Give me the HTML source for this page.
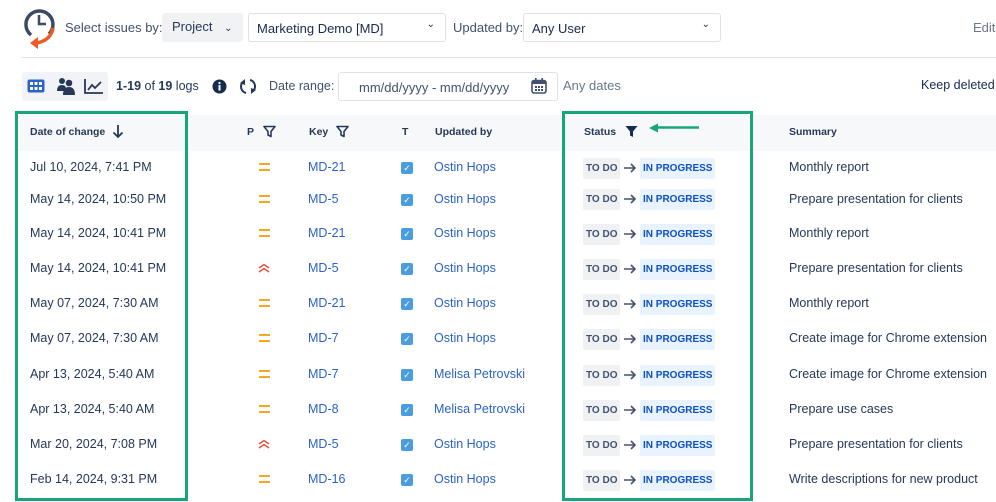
<!DOCTYPE html>
<html><head><meta charset="utf-8"><style>
*{box-sizing:border-box;margin:0;padding:0}
body{width:996px;height:502px;overflow:hidden;background:#fff;font-family:"Liberation Sans",sans-serif;color:#172b4d;position:relative;font-size:13px}
.a{position:absolute;white-space:nowrap}
.sel{position:absolute;border:1px solid #dfe1e6;border-radius:3px;height:29px;top:13px;font-size:13px;padding:7px 8px;color:#172b4d}
.chev{position:absolute;right:10px;top:5px;font-size:10px}
.hdr{font-size:10.5px;font-weight:bold;color:#253858}
.d{left:30px;font-size:12.5px;color:#253858}
.k{left:308px;color:#2a63c9;font-size:12.5px}
.u{left:434px;color:#2a63c9;font-size:12.5px}
.s{left:789px;color:#253858;font-size:12.5px}
.cb{left:401px;width:12px;height:12px;background:#4a9ee0;border-radius:2px;color:#fff;font-size:9px;line-height:12px;text-align:center}
.pm{left:259px;width:11px;height:8px;border-top:2px solid #f5a623;border-bottom:2px solid #f5a623}
.st{left:583px;height:20px;font-size:10px;font-weight:bold;display:flex;align-items:center}
.st .t{display:inline-block;background:#f0f1f3;color:#42526e;padding:5px 3px;border-radius:2px;width:37px;text-align:center}
.st .ar{display:inline-block;width:20px;height:20px;position:relative}
.st .p{display:inline-block;background:#e9f2ff;color:#0b50c4;padding:5px 3px;border-radius:2px;width:75px;text-align:center}
.box{position:absolute;border:3px solid #17a57b}
</style></head><body>
<svg class="a" style="left:22px;top:6px" width="38" height="44" viewBox="0 0 38 44">
<path d="M9 29 A13.5 13.5 0 1 1 27 28" fill="none" stroke="#3d4a66" stroke-width="3.5"/>
<path d="M17 9 V18 H24" fill="none" stroke="#3d4a66" stroke-width="2.5"/>
<path d="M31 22 Q29 34 15 37" fill="none" stroke="#ee5a24" stroke-width="3.5"/>
<path d="M8 37 L16 31 L16 43 Z" fill="#ee5a24"/>
</svg>
<div class="a" style="left:65px;top:20px;font-size:13px;color:#42526e">Select issues by:</div>
<div class="a" style="left:162px;top:13px;width:81px;height:29px;background:#f1f2f4;border-radius:3px;font-size:13px;padding:6px 10px;color:#253858">Project <span style="font-size:10px;margin-left:8px">&#8964;</span></div>
<div class="sel" style="left:248px;width:198px">Marketing Demo [MD]<span class="chev">&#8964;</span></div>
<div class="a" style="left:453px;top:20px;font-size:13px;color:#42526e">Updated by:</div>
<div class="sel" style="left:523px;width:198px">Any User<span class="chev">&#8964;</span></div>
<div class="a" style="left:973px;top:20px;font-size:13px;color:#6b778c">Edit</div>
<div class="a" style="left:22px;top:57px;width:974px;height:1px;background:#dfe1e6"></div>

<div class="a" style="left:22px;top:72px;width:86px;height:29px;background:#f1f3f6;border-radius:3px"></div>
<svg class="a" style="left:27px;top:79px" width="18" height="14"><rect x="0.5" y="0.5" width="17" height="13" rx="2" fill="#2a63c9"/><g fill="#fff"><rect x="3" y="3" width="3" height="3"/><rect x="7.5" y="3" width="3" height="3"/><rect x="12" y="3" width="3" height="3"/><rect x="3" y="8" width="3" height="3"/><rect x="7.5" y="8" width="3" height="3"/><rect x="12" y="8" width="3" height="3"/></g></svg>
<svg class="a" style="left:56px;top:77px" width="20" height="18"><circle cx="6" cy="4" r="3" fill="#253858"/><circle cx="13" cy="6" r="3.3" fill="#253858"/><path d="M1 14 Q1 8 6 8 Q10 8 10 12 V14Z" fill="#253858"/><path d="M7 18 Q7 10 13 10 Q19 10 19 18Z" fill="#253858"/></svg>
<svg class="a" style="left:84px;top:78px" width="20" height="16"><path d="M1 1 V15 H19" fill="none" stroke="#253858" stroke-width="1.8"/><path d="M4 12 L8 7 L11 10 L17 4" fill="none" stroke="#253858" stroke-width="1.8"/></svg>
<div class="a" style="left:116px;top:79px;font-size:12.5px;color:#253858"><b>1-19</b> of <b>19</b> logs</div>
<svg class="a" style="left:212px;top:79px" width="15" height="15"><circle cx="7.5" cy="7.5" r="7" fill="#172b4d"/><rect x="6.5" y="6" width="2" height="5.5" fill="#fff"/><circle cx="7.5" cy="4" r="1.1" fill="#fff"/></svg>
<svg class="a" style="left:239px;top:78px" width="18" height="17"><path d="M4 4 A6.5 6.5 0 0 0 7 15" fill="none" stroke="#253858" stroke-width="2"/><path d="M14 13 A6.5 6.5 0 0 0 11 2" fill="none" stroke="#253858" stroke-width="2"/><path d="M1 5 L6 1 L6 7Z" fill="#253858"/><path d="M17 12 L12 16 L12 10Z" fill="#253858"/></svg>
<div class="a" style="left:269px;top:79px;font-size:12.5px;color:#42526e">Date range:</div>
<div class="a" style="left:338px;top:72px;width:220px;height:29px;border:1px solid #dfe1e6;border-radius:3px;font-size:13px;color:#42526e;padding:7px 0 0 20px">mm/dd/yyyy - mm/dd/yyyy</div>
<svg class="a" style="left:531px;top:78px" width="16" height="16"><rect x="1" y="2.5" width="14" height="12.5" rx="2" fill="none" stroke="#42526e" stroke-width="1.6"/><rect x="1" y="2.5" width="14" height="3.5" fill="#42526e"/><rect x="4" y="0" width="1.6" height="4" fill="#42526e"/><rect x="10.4" y="0" width="1.6" height="4" fill="#42526e"/><g fill="#42526e"><rect x="4" y="8" width="2" height="2"/><rect x="7" y="8" width="2" height="2"/><rect x="10" y="8" width="2" height="2"/><rect x="4" y="11" width="2" height="2"/><rect x="7" y="11" width="2" height="2"/><rect x="10" y="11" width="2" height="2"/></g></svg>
<div class="a" style="left:563px;top:78px;font-size:13px;color:#6b778c">Any dates</div>
<div class="a" style="left:921px;top:78px;font-size:12.5px;color:#172b4d">Keep deleted</div>

<div class="a" style="left:16px;top:115px;width:980px;height:36px;background:#f7f8f9"></div>
<div class="a hdr" style="left:30px;top:126px">Date of change</div>
<svg class="a" style="left:112px;top:124px" width="12" height="15"><path d="M6 1 V13 M1.5 8.5 L6 13 L10.5 8.5" fill="none" stroke="#253858" stroke-width="1.8"/></svg>
<div class="a hdr" style="left:247px;top:126px">P</div>
<svg class="a" style="left:263px;top:125px" width="13" height="13"><path d="M1 1.5 H12 L8 6.5 V11.5 L5 10 V6.5 Z" fill="none" stroke="#253858" stroke-width="1.6" stroke-linejoin="round"/></svg>
<div class="a hdr" style="left:309px;top:126px">Key</div>
<svg class="a" style="left:336px;top:125px" width="13" height="13"><path d="M1 1.5 H12 L8 6.5 V11.5 L5 10 V6.5 Z" fill="none" stroke="#253858" stroke-width="1.6" stroke-linejoin="round"/></svg>
<div class="a hdr" style="left:402px;top:126px">T</div>
<div class="a hdr" style="left:435px;top:126px">Updated by</div>
<div class="a hdr" style="left:584px;top:126px">Status</div>
<svg class="a" style="left:625px;top:125px" width="13" height="13"><path d="M0.5 1 H12.5 L8 6.5 V12 L5 10.5 V6.5 Z" fill="#172b4d"/></svg>
<svg class="a" style="left:648px;top:122px" width="52" height="12"><path d="M51 5.5 H8" stroke="#17a57b" stroke-width="2.5"/><path d="M1 6 L10 1.5 V10.5Z" fill="#17a57b"/></svg>
<div class="a hdr" style="left:789px;top:126px">Summary</div>

<div class="a d" style="top:160px">Jul 10, 2024, 7:41 PM</div><div class="a pm" style="top:163px"></div><div class="a k" style="top:160px">MD-21</div><div class="a cb" style="top:162px">&#10003;</div><div class="a u" style="top:160px">Ostin Hops</div><div class="a st" style="top:158px"><span class="t">TO DO</span><svg class="ar" viewBox="0 0 20 20"><path d="M4 10 H15 M11 6 L15 10 L11 14" fill="none" stroke="#42526e" stroke-width="1.6"/></svg><span class="p">IN PROGRESS</span></div><div class="a s" style="top:160px">Monthly report</div>

<div class="a d" style="top:192px">May 14, 2024, 10:50 PM</div><div class="a pm" style="top:195px"></div><div class="a k" style="top:192px">MD-5</div><div class="a cb" style="top:194px">&#10003;</div><div class="a u" style="top:192px">Ostin Hops</div><div class="a st" style="top:189px"><span class="t">TO DO</span><svg class="ar" viewBox="0 0 20 20"><path d="M4 10 H15 M11 6 L15 10 L11 14" fill="none" stroke="#42526e" stroke-width="1.6"/></svg><span class="p">IN PROGRESS</span></div><div class="a s" style="top:192px">Prepare presentation for clients</div>

<div class="a d" style="top:226px">May 14, 2024, 10:41 PM</div><div class="a pm" style="top:229px"></div><div class="a k" style="top:226px">MD-21</div><div class="a cb" style="top:228px">&#10003;</div><div class="a u" style="top:226px">Ostin Hops</div><div class="a st" style="top:224px"><span class="t">TO DO</span><svg class="ar" viewBox="0 0 20 20"><path d="M4 10 H15 M11 6 L15 10 L11 14" fill="none" stroke="#42526e" stroke-width="1.6"/></svg><span class="p">IN PROGRESS</span></div><div class="a s" style="top:226px">Monthly report</div>

<div class="a d" style="top:261px">May 14, 2024, 10:41 PM</div><svg class="a" style="left:258px;top:263px" width="12" height="10"><path d="M1 5 L6 1.5 L11 5 M1 9 L6 5.5 L11 9" fill="none" stroke="#e5533d" stroke-width="1.5"/></svg><div class="a k" style="top:261px">MD-5</div><div class="a cb" style="top:263px">&#10003;</div><div class="a u" style="top:261px">Ostin Hops</div><div class="a st" style="top:259px"><span class="t">TO DO</span><svg class="ar" viewBox="0 0 20 20"><path d="M4 10 H15 M11 6 L15 10 L11 14" fill="none" stroke="#42526e" stroke-width="1.6"/></svg><span class="p">IN PROGRESS</span></div><div class="a s" style="top:261px">Prepare presentation for clients</div>

<div class="a d" style="top:296px">May 07, 2024, 7:30 AM</div><div class="a pm" style="top:299px"></div><div class="a k" style="top:296px">MD-21</div><div class="a cb" style="top:298px">&#10003;</div><div class="a u" style="top:296px">Ostin Hops</div><div class="a st" style="top:294px"><span class="t">TO DO</span><svg class="ar" viewBox="0 0 20 20"><path d="M4 10 H15 M11 6 L15 10 L11 14" fill="none" stroke="#42526e" stroke-width="1.6"/></svg><span class="p">IN PROGRESS</span></div><div class="a s" style="top:296px">Monthly report</div>

<div class="a d" style="top:331px">May 07, 2024, 7:30 AM</div><div class="a pm" style="top:334px"></div><div class="a k" style="top:331px">MD-7</div><div class="a cb" style="top:333px">&#10003;</div><div class="a u" style="top:331px">Ostin Hops</div><div class="a st" style="top:329px"><span class="t">TO DO</span><svg class="ar" viewBox="0 0 20 20"><path d="M4 10 H15 M11 6 L15 10 L11 14" fill="none" stroke="#42526e" stroke-width="1.6"/></svg><span class="p">IN PROGRESS</span></div><div class="a s" style="top:331px">Create image for Chrome extension</div>

<div class="a d" style="top:367px">Apr 13, 2024, 5:40 AM</div><div class="a pm" style="top:370px"></div><div class="a k" style="top:367px">MD-7</div><div class="a cb" style="top:369px">&#10003;</div><div class="a u" style="top:367px">Melisa Petrovski</div><div class="a st" style="top:365px"><span class="t">TO DO</span><svg class="ar" viewBox="0 0 20 20"><path d="M4 10 H15 M11 6 L15 10 L11 14" fill="none" stroke="#42526e" stroke-width="1.6"/></svg><span class="p">IN PROGRESS</span></div><div class="a s" style="top:367px">Create image for Chrome extension</div>

<div class="a d" style="top:402px">Apr 13, 2024, 5:40 AM</div><div class="a pm" style="top:405px"></div><div class="a k" style="top:402px">MD-8</div><div class="a cb" style="top:404px">&#10003;</div><div class="a u" style="top:402px">Melisa Petrovski</div><div class="a st" style="top:400px"><span class="t">TO DO</span><svg class="ar" viewBox="0 0 20 20"><path d="M4 10 H15 M11 6 L15 10 L11 14" fill="none" stroke="#42526e" stroke-width="1.6"/></svg><span class="p">IN PROGRESS</span></div><div class="a s" style="top:402px">Prepare use cases</div>

<div class="a d" style="top:437px">Mar 20, 2024, 7:08 PM</div><svg class="a" style="left:258px;top:439px" width="12" height="10"><path d="M1 5 L6 1.5 L11 5 M1 9 L6 5.5 L11 9" fill="none" stroke="#e5533d" stroke-width="1.5"/></svg><div class="a k" style="top:437px">MD-5</div><div class="a cb" style="top:439px">&#10003;</div><div class="a u" style="top:437px">Ostin Hops</div><div class="a st" style="top:435px"><span class="t">TO DO</span><svg class="ar" viewBox="0 0 20 20"><path d="M4 10 H15 M11 6 L15 10 L11 14" fill="none" stroke="#42526e" stroke-width="1.6"/></svg><span class="p">IN PROGRESS</span></div><div class="a s" style="top:437px">Prepare presentation for clients</div>

<div class="a d" style="top:472px">Feb 14, 2024, 9:31 PM</div><div class="a pm" style="top:475px"></div><div class="a k" style="top:472px">MD-16</div><div class="a cb" style="top:474px">&#10003;</div><div class="a u" style="top:472px">Ostin Hops</div><div class="a st" style="top:470px"><span class="t">TO DO</span><svg class="ar" viewBox="0 0 20 20"><path d="M4 10 H15 M11 6 L15 10 L11 14" fill="none" stroke="#42526e" stroke-width="1.6"/></svg><span class="p">IN PROGRESS</span></div><div class="a s" style="top:472px">Write descriptions for new product</div>

<div class="box" style="left:15px;top:111px;width:173px;height:390px"></div>
<div class="box" style="left:562px;top:111px;width:191px;height:390px"></div>
</body></html>
